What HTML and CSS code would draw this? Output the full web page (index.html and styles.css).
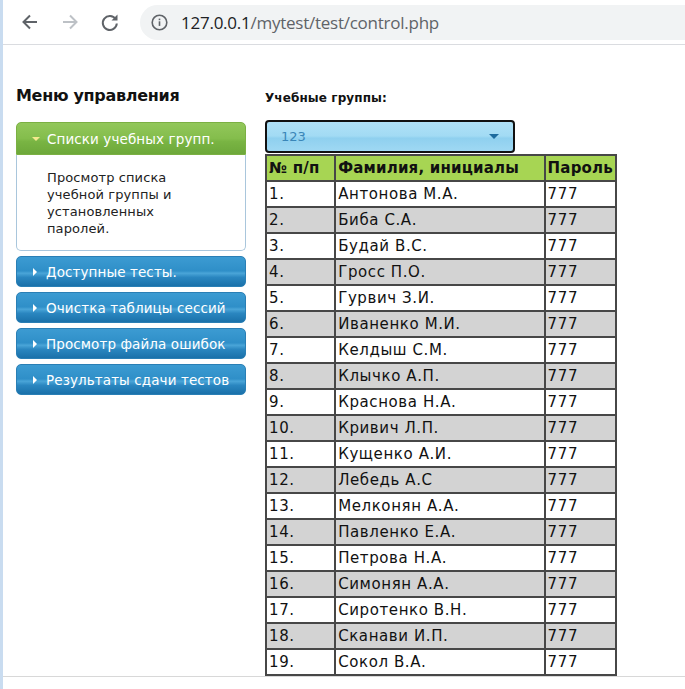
FILE: index.html
```html
<!DOCTYPE html>
<html lang="ru">
<head>
<meta charset="utf-8">
<title>control</title>
<link rel="stylesheet" href="styles.css">
</head>
<body>
<div class="edge"></div>
<div class="window">
  <div class="toolbar">
    <span class="nav">
      <svg width="20" height="20" viewBox="0 0 20 20"><path d="M17 10H4M10 3.5L3.5 10 10 16.5" fill="none" stroke="#5f6368" stroke-width="2"/></svg>
    </span>
    <span class="nav">
      <svg width="20" height="20" viewBox="0 0 20 20"><path d="M3 10h13M10 3.5l6.5 6.5-6.5 6.5" fill="none" stroke="#bdc1c6" stroke-width="2"/></svg>
    </span>
    <span class="nav">
      <svg width="20" height="20" viewBox="0 0 20 20"><path d="M15.6 7A7 7 0 1 0 16.8 11.5" fill="none" stroke="#5f6368" stroke-width="2"/><path d="M17.5 2.5v6h-6z" fill="#5f6368"/></svg>
    </span>
    <div class="omnibox">
      <svg class="info" width="17" height="17" viewBox="0 0 17 17"><circle cx="8.5" cy="8.5" r="7.3" fill="none" stroke="#5f6368" stroke-width="1.6"/><rect x="7.7" y="7.3" width="1.6" height="4.6" fill="#5f6368"/><rect x="7.7" y="4.6" width="1.6" height="1.6" fill="#5f6368"/></svg>
      <span class="url"><span class="host">127.0.0.1</span>/mytest/test/control.php</span>
    </div>
  </div>
  <div class="page">
    <div class="menu-col">
      <h2 class="menu-title">Меню управления</h2>
      <div class="acc">
        <div class="acc-head active"><span class="tri-down"></span>Списки учебных групп.</div>
        <div class="acc-body">Просмотр списка учебной группы и установленных паролей.</div>
        <div class="acc-head"><span class="tri-right"></span>Доступные тесты.</div>
        <div class="acc-head"><span class="tri-right"></span>Очистка таблицы сессий</div>
        <div class="acc-head"><span class="tri-right"></span>Просмотр файла ошибок</div>
        <div class="acc-head"><span class="tri-right"></span>Результаты сдачи тестов</div>
      </div>
    </div>
    <div class="main-col">
      <div class="label">Учебные группы:</div>
      <div class="select"><span>123</span><span class="sel-arrow"></span></div>
      <table class="grid">
        <tr class="hdr"><td class="c1">№ п/п</td><td class="c2">Фамилия, инициалы</td><td class="c3">Пароль</td></tr>
        <tr><td>1.</td><td>Антонова М.А.</td><td>777</td></tr>
        <tr class="alt"><td>2.</td><td>Биба С.А.</td><td>777</td></tr>
        <tr><td>3.</td><td>Будай В.С.</td><td>777</td></tr>
        <tr class="alt"><td>4.</td><td>Гросс П.О.</td><td>777</td></tr>
        <tr><td>5.</td><td>Гурвич З.И.</td><td>777</td></tr>
        <tr class="alt"><td>6.</td><td>Иваненко М.И.</td><td>777</td></tr>
        <tr><td>7.</td><td>Келдыш С.М.</td><td>777</td></tr>
        <tr class="alt"><td>8.</td><td>Клычко А.П.</td><td>777</td></tr>
        <tr><td>9.</td><td>Краснова Н.А.</td><td>777</td></tr>
        <tr class="alt"><td>10.</td><td>Кривич Л.П.</td><td>777</td></tr>
        <tr><td>11.</td><td>Кущенко А.И.</td><td>777</td></tr>
        <tr class="alt"><td>12.</td><td>Лебедь А.С</td><td>777</td></tr>
        <tr><td>13.</td><td>Мелконян А.А.</td><td>777</td></tr>
        <tr class="alt"><td>14.</td><td>Павленко Е.А.</td><td>777</td></tr>
        <tr><td>15.</td><td>Петрова Н.А.</td><td>777</td></tr>
        <tr class="alt"><td>16.</td><td>Симонян А.А.</td><td>777</td></tr>
        <tr><td>17.</td><td>Сиротенко В.Н.</td><td>777</td></tr>
        <tr class="alt"><td>18.</td><td>Сканави И.П.</td><td>777</td></tr>
        <tr><td>19.</td><td>Сокол В.А.</td><td>777</td></tr>
      </table>
    </div>
  </div>
  <div class="statusbar"></div>
</div>
</body>
</html>
```
FILE: styles.css
```css
html, body {
  margin: 0;
  padding: 0;
  background: #fff;
}
body {
  display: flex;
  width: 685px;
  height: 689px;
  overflow: hidden;
  font-family: "DejaVu Sans", Verdana, sans-serif;
}
.edge {
  width: 3px;
  flex: none;
  background: #c9dcf0;
}
.window {
  flex: 1;
  display: flex;
  flex-direction: column;
  min-width: 0;
}
.toolbar {
  height: 45px;
  flex: none;
  display: flex;
  align-items: center;
  border-bottom: 1px solid #dadce0;
  box-sizing: border-box;
  padding-left: 17px;
}
.nav {
  width: 40px;
  height: 20px;
  display: flex;
  align-items: center;
}
.omnibox {
  flex: 1;
  height: 35px;
  background: #f1f3f4;
  border-radius: 18px 0 0 18px;
  display: flex;
  align-items: center;
  padding-left: 11px;
}
.info {
  margin-right: 13px;
}
.url {
  font-family: "Open Sans", "Noto Sans", sans-serif;
  font-size: 17px;
  color: #5f6368;
  letter-spacing: -0.25px;
}
.host {
  color: #202124;
}
.page {
  height: 632px;
  flex: none;
  display: flex;
  padding-left: 13px;
  box-sizing: border-box;
  overflow: hidden;
  border-bottom: 1px solid #d8d8d8;
}
.menu-col {
  width: 230px;
  flex: none;
}
.menu-title {
  margin: 41px 0 16px 0;
  font-size: 16px;
  line-height: 20px;
  font-weight: bold;
  color: #111;
  letter-spacing: -0.3px;
}
.acc {
  display: flex;
  flex-direction: column;
}
.acc-head {
  height: 31px;
  border-radius: 5px;
  border: 1px solid #2a7fb5;
  box-sizing: border-box;
  background: linear-gradient(#3c9bd2 0%, #2f8fc8 48%, #4aa5d8 56%, #2a86c0 70%, #1a71aa 100%);
  color: #fff;
  font-size: 13.5px;
  letter-spacing: 0.1px;
  display: flex;
  align-items: center;
  padding-left: 14px;
  margin-bottom: 5px;
}
.acc-head.active {
  height: 33px;
  border-radius: 5px 5px 0 0;
  border: 1px solid #7bb043;
  background: linear-gradient(#92c75a 0%, #84bd4c 50%, #79b443 60%, #6da83a 100%);
  margin-bottom: 0;
}
.tri-down {
  width: 0;
  height: 0;
  border-left: 4px solid transparent;
  border-right: 4px solid transparent;
  border-top: 4px solid #f5e98e;
  margin-right: 7px;
  margin-left: 1px;
}
.tri-right {
  width: 0;
  height: 0;
  border-top: 4px solid transparent;
  border-bottom: 4px solid transparent;
  border-left: 4px solid #fff;
  margin-right: 9px;
  margin-left: 2px;
}
.acc-body {
  height: 96px;
  box-sizing: border-box;
  border: 1px solid #a9c6dc;
  border-top: none;
  border-radius: 0 0 5px 5px;
  padding: 14px 60px 0 30px;
  font-size: 13px;
  line-height: 17px;
  color: #222;
  letter-spacing: 0.1px;
  margin-bottom: 5px;
}
.main-col {
  margin-left: 19px;
  width: 352px;
  flex: none;
}
.label {
  margin-top: 45px;
  font-size: 12px;
  line-height: 16px;
  font-weight: bold;
  color: #111;
  letter-spacing: 0.1px;
}
.select {
  margin-top: 14px;
  width: 250px;
  height: 33px;
  box-sizing: border-box;
  border: 2px solid #111;
  border-radius: 4px;
  background: linear-gradient(#b0e1f7 0%, #a2dbf4 48%, #8fd0ef 56%, #9fd8f3 100%);
  display: flex;
  align-items: center;
  justify-content: space-between;
  padding: 0 14px 0 14px;
  font-size: 13px;
  color: #3a86b8;
}
.sel-arrow {
  width: 0;
  height: 0;
  border-left: 5px solid transparent;
  border-right: 5px solid transparent;
  border-top: 5px solid #1d6b9e;
}
.grid {
  margin-top: 1px;
  border-collapse: collapse;
  border: 2px solid #333;
  font-size: 15px;
  color: #111;
  letter-spacing: 0.6px;
}
.grid td {
  border: 2px solid #474747;
  height: 26px;
  padding: 0 2px;
  box-sizing: border-box;
  line-height: 18px;
  white-space: nowrap;
}
.grid .c1 { width: 70px; }
.grid .c2 { width: 211px; }
.grid .c3 { width: 70px; }
.grid tr.hdr td {
  background: #a7d553;
  font-weight: bold;
  letter-spacing: 0.2px;
}
.grid tr.alt td {
  background: #d3d3d3;
}
.statusbar {
  flex: 1;
}
```
